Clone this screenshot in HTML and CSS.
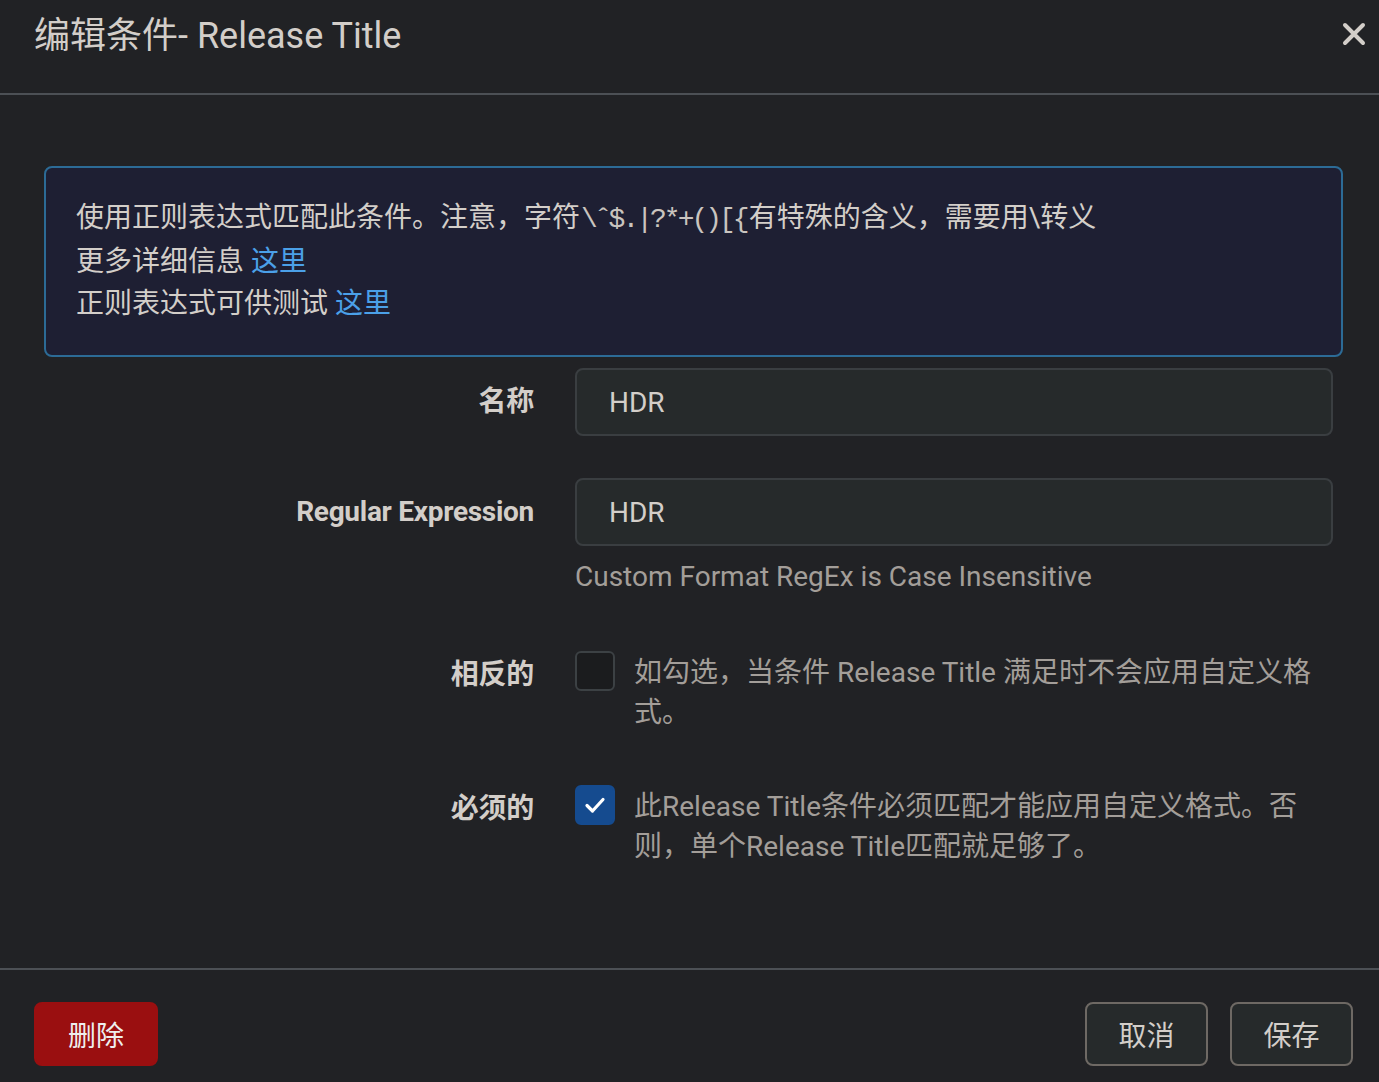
FILE: index.html
```html
<!DOCTYPE html>
<html lang="zh-CN">
<head>
    <meta charset="UTF-8">
    <meta name="viewport" content="width=device-width, initial-scale=1.0">
    <title>编辑条件</title>
    <link rel="stylesheet" href="styles.css">
</head>
<body>
    <div class="modal">
        <header class="modal-header">
            <h1 class="modal-title">编辑条件- Release Title</h1>
            <button class="close-btn" aria-label="关闭">
                <svg width="24" height="24" viewBox="0 0 24 24">
                    <path d="M3 3 L21 21 M21 3 L3 21" stroke="currentColor" stroke-width="4" stroke-linecap="round"/>
                </svg>
            </button>
        </header>

        <main class="modal-body">
            <div class="alert">
                <div>使用正则表达式匹配此条件。注意，字符<span class="mono">\ˆ$.|?*+()[{</span>有特殊的含义，需要用\转义</div>
                <div>更多详细信息 <a href="#">这里</a></div>
                <div>正则表达式可供测试 <a href="#">这里</a></div>
            </div>

            <div class="form-group">
                <label class="form-label">名称</label>
                <div class="form-field">
                    <input type="text" class="text-input" value="HDR">
                </div>
            </div>

            <div class="form-group">
                <label class="form-label">Regular Expression</label>
                <div class="form-field">
                    <input type="text" class="text-input" value="HDR">
                    <div class="help-text">Custom Format RegEx is Case Insensitive</div>
                </div>
            </div>

            <div class="form-group check-group">
                <label class="form-label">相反的</label>
                <div class="form-field check-field">
                    <span class="checkbox"></span>
                    <span class="check-text">如勾选，当条件 Release Title 满足时不会应用自定义格式。</span>
                </div>
            </div>

            <div class="form-group check-group">
                <label class="form-label">必须的</label>
                <div class="form-field check-field">
                    <span class="checkbox checked">
                        <svg width="22" height="22" viewBox="0 0 22 22">
                            <path d="M3 11.5 L8.5 17 L19 5.5" fill="none" stroke="#fff" stroke-width="3.2" stroke-linecap="round" stroke-linejoin="round"/>
                        </svg>
                    </span>
                    <span class="check-text">此Release Title条件必须匹配才能应用自定义格式。否则，单个Release Title匹配就足够了。</span>
                </div>
            </div>
        </main>

        <footer class="modal-footer">
            <button class="btn btn-danger">删除</button>
            <div class="footer-right">
                <button class="btn">取消</button>
                <button class="btn">保存</button>
            </div>
        </footer>
    </div>
</body>
</html>
```

FILE: styles.css
```css
body {
    margin: 0;
    padding: 0;
    background-color: #212225;
    color: #d3cec9;
    font-family: Roboto, "Noto Sans CJK SC", sans-serif;
    font-size: 28px;
    line-height: 1.528571429;
}

.modal {
    display: flex;
    flex-direction: column;
    height: 100vh;
}

.modal-header {
    display: flex;
    align-items: flex-start;
    justify-content: space-between;
    height: 93px;
    border-bottom: 2px solid #4c5055;
    box-sizing: content-box;
}

.modal-title {
    margin: 0;
    padding: 14px 0 0 34px;
    font-size: 36px;
    font-weight: normal;
    line-height: 44px;
    color: #d3cec9;
}

.close-btn {
    background: none;
    border: none;
    padding: 0;
    margin: 22px 13px 0 0;
    color: #d3cec9;
    cursor: pointer;
    width: 24px;
    height: 24px;
}

.modal-body {
    flex: 1;
    padding: 71px 46px 0 34px;
}

.alert {
    margin: 0 -10px 11px 10px;
    padding: 29px 30px 30px;
    border: 2px solid #2c6b96;
    border-radius: 8px;
    background-color: #1e1f33;
    color: #d3cec9;
    line-height: 42px;
}

.alert a {
    color: #4ba0e8;
    text-decoration: none;
}

.mono {
    font-family: "Liberation Mono", monospace;
    letter-spacing: -3px;
    margin: 0 2px 0 1px;
    color: #c9c4bf;
}

.form-group {
    display: flex;
    margin-bottom: 42px;
}

.form-label {
    flex: 0 0 500px;
    margin-right: 41px;
    padding-top: 13px;
    text-align: right;
    font-weight: bold;
    letter-spacing: -0.28px;
    color: #d3cec9;
}

.form-field {
    flex: 1;
}

.text-input {
    display: block;
    width: 100%;
    height: 68px;
    box-sizing: border-box;
    padding: 0 32px;
    border: 2px solid #3a3e41;
    border-radius: 8px;
    background-color: #262a2b;
    color: #d3cec9;
    font-family: Roboto, "Noto Sans CJK SC", sans-serif;
    font-size: 28px;
}

.help-text {
    margin-top: 10px;
    color: #a39e99;
}

.check-group {
    padding-top: 10px;
    margin-top: -10px;
}

.check-field {
    display: flex;
    align-items: flex-start;
    padding-top: 10px;
}

.checkbox {
    flex: 0 0 auto;
    display: flex;
    align-items: center;
    justify-content: center;
    width: 40px;
    height: 40px;
    box-sizing: border-box;
    border: 2px solid #3c4144;
    border-radius: 6px;
    background-color: #1b1c1e;
}

.checkbox.checked {
    border-color: #154b8f;
    background-color: #154b8f;
}

.check-text {
    margin-left: 19px;
    margin-top: 2px;
    max-width: 680px;
    line-height: 40px;
    color: #a39e99;
}

.modal-footer {
    display: flex;
    justify-content: space-between;
    padding: 32px 26px 16px 34px;
    border-top: 2px solid #4c5055;
}

.footer-right {
    display: flex;
    gap: 22px;
}

.btn {
    width: 123px;
    height: 64px;
    border: 2px solid #6e6964;
    border-radius: 8px;
    background-color: #262a2b;
    color: #d3cec9;
    font-family: Roboto, "Noto Sans CJK SC", sans-serif;
    font-size: 28px;
    cursor: pointer;
}

.btn-danger {
    width: 124px;
    border-color: #9a0f10;
    background-color: #9a0f10;
    color: #eee;
}
```
